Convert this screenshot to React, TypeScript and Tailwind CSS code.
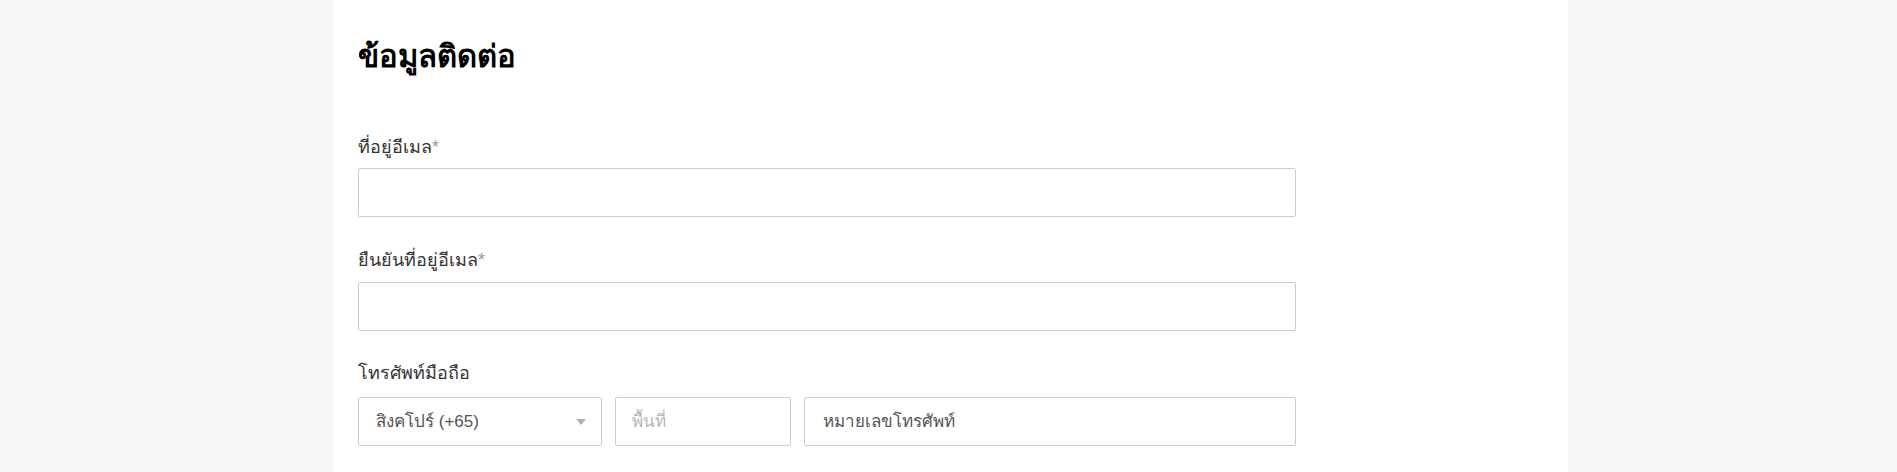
export default function App() {
  return (
    <div className="min-h-[472px] w-full bg-[#f6f6f6] font-['Liberation_Sans','Noto_Sans',sans-serif]">
      <div className="ml-[333px] w-[1235px] min-h-[472px] bg-white pl-[25px] pt-[37px]">
        <h2 className="text-[31px] font-bold leading-[40px] text-black">ข้อมูลติดต่อ</h2>

        <div className="mt-[59px] w-[938px]">
          <label className="block text-[18px] leading-[22px] text-[#333]">
            ที่อยู่อีเมล<span className="text-[#999]">*</span>
          </label>
          <input
            type="email"
            className="mt-[10px] block h-[49px] w-full rounded-[2px] border border-[#cccccc] bg-white px-4 text-[17px] outline-none"
          />
        </div>

        <div className="mt-[32px] w-[938px]">
          <label className="block text-[18px] leading-[22px] text-[#333]">
            ยืนยันที่อยู่อีเมล<span className="text-[#999]">*</span>
          </label>
          <input
            type="email"
            className="mt-[11px] block h-[49px] w-full rounded-[2px] border border-[#cccccc] bg-white px-4 text-[17px] outline-none"
          />
        </div>

        <div className="mt-[31px] w-[938px]">
          <label className="block text-[18px] leading-[22px] text-[#333]">โทรศัพท์มือถือ</label>
          <div className="mt-[13px] flex gap-[13px]">
            <div className="relative flex h-[49px] w-[244px] items-center rounded-[2px] border border-[#cccccc] bg-white pl-[17px] text-[17px] text-[#555]">
              สิงคโปร์ (+65)
              <span className="absolute right-[15px] top-[21px] h-0 w-0 border-x-[5px] border-t-[6px] border-x-transparent border-t-[#b0b0b0]" />
            </div>
            <input
              placeholder="พื้นที่"
              className="h-[49px] w-[176px] rounded-[2px] border border-[#cccccc] bg-white px-4 text-[17px] text-[#555] outline-none placeholder:text-[#b5b5b5]"
            />
            <input
              placeholder="หมายเลขโทรศัพท์"
              className="h-[49px] flex-1 rounded-[2px] border border-[#cccccc] bg-white px-[18px] text-[17px] text-[#555] outline-none placeholder:text-[#555]"
            />
          </div>
        </div>
      </div>
    </div>
  );
}
